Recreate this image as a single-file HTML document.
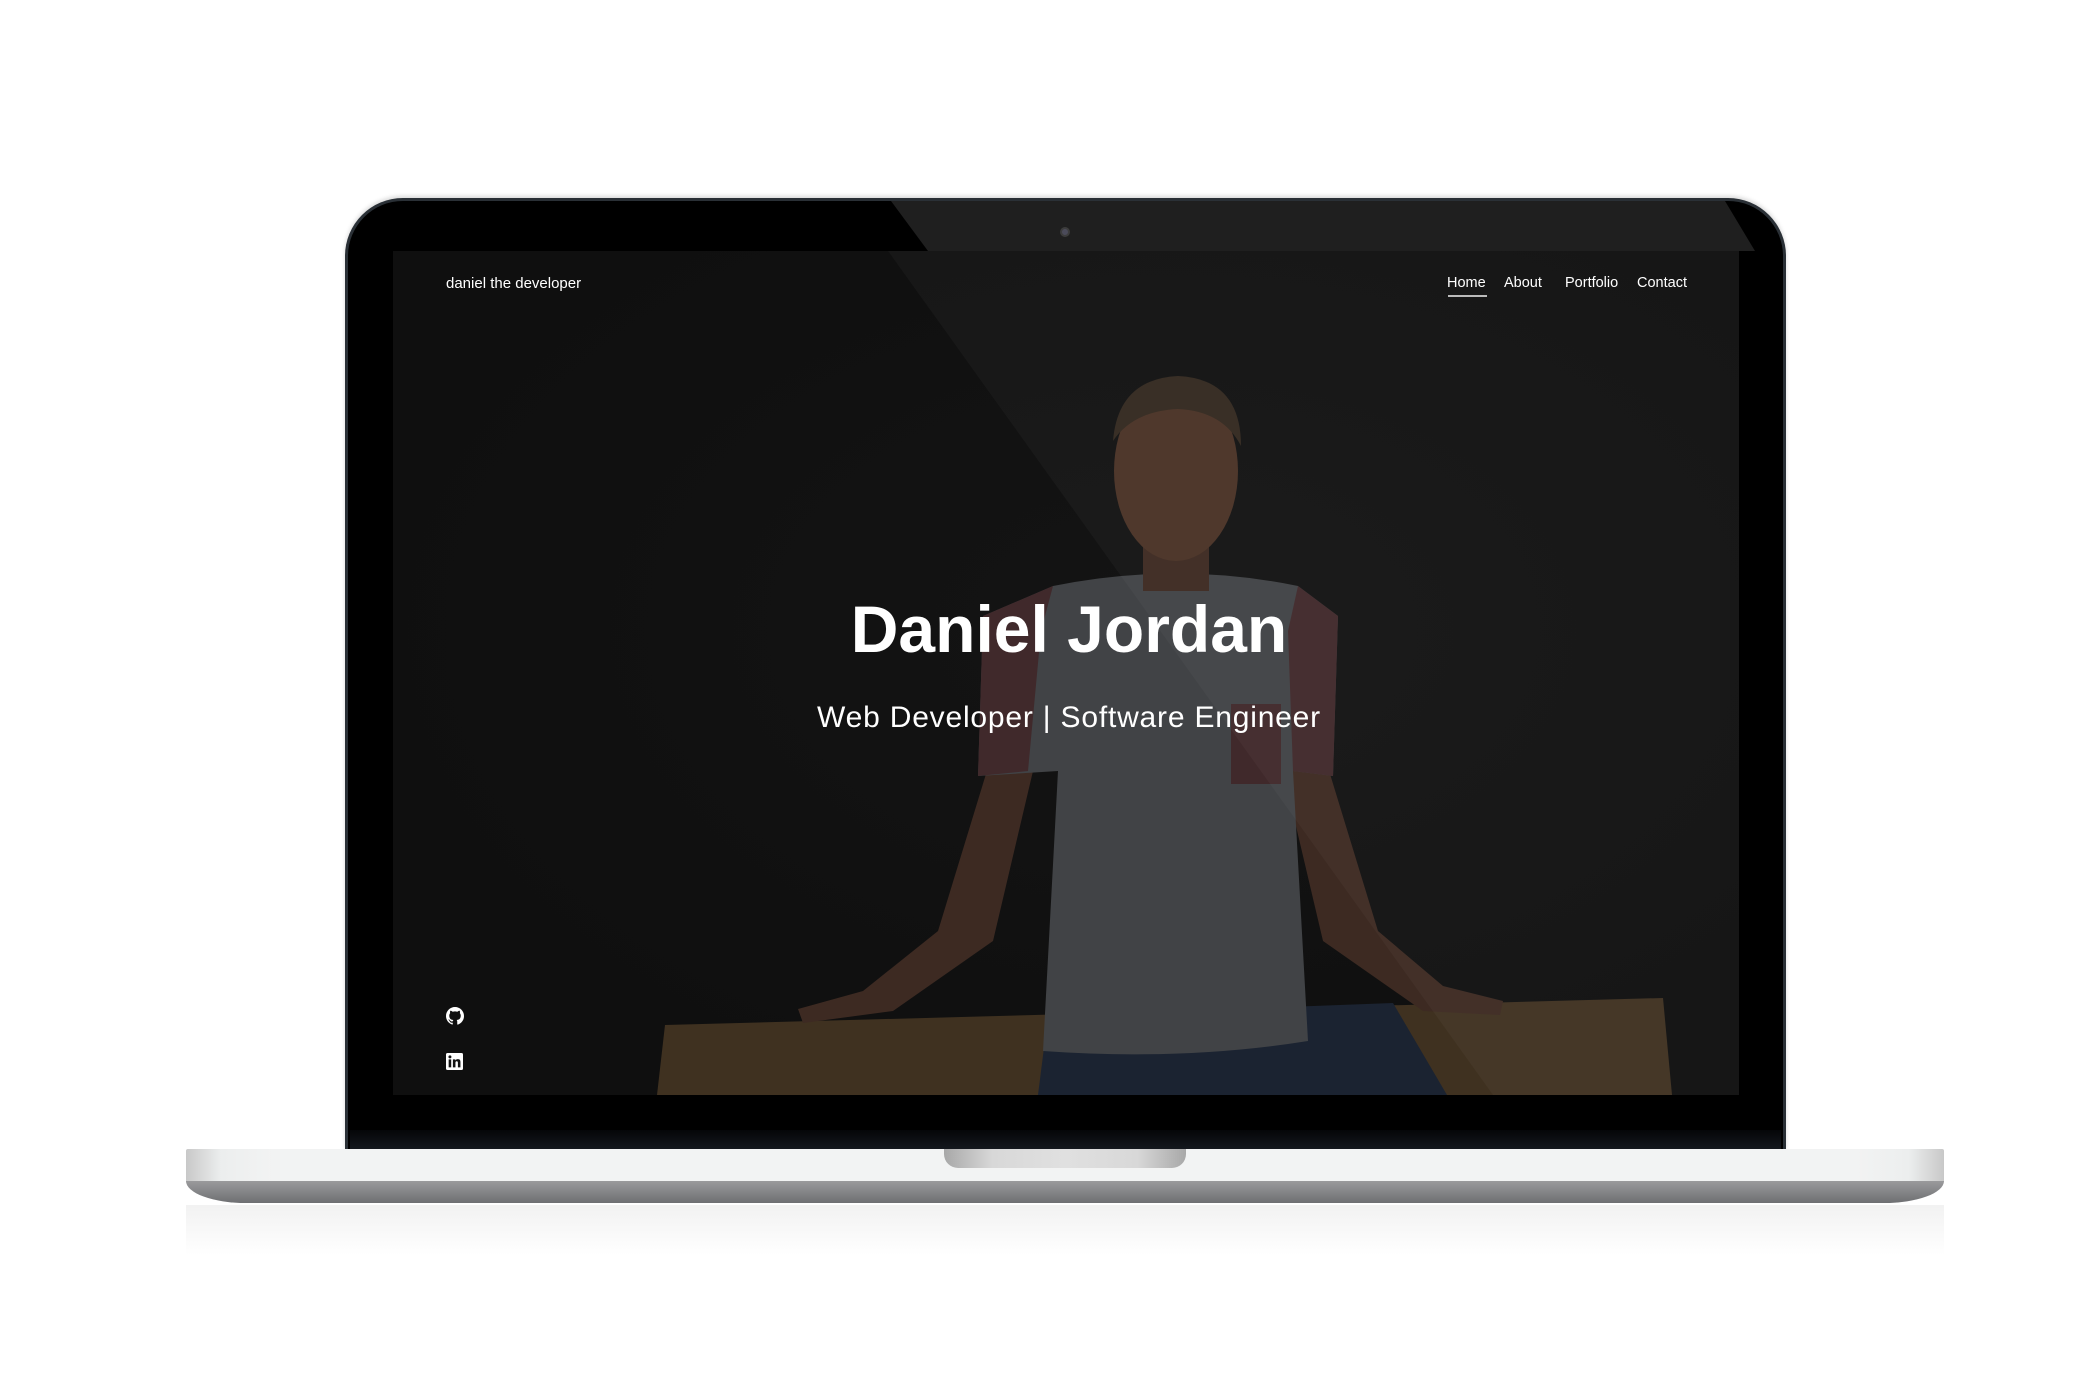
<!DOCTYPE html>
<html><head><meta charset="utf-8"><style>
*{margin:0;padding:0;box-sizing:border-box}
body{width:2100px;height:1400px;background:#fff;position:relative;overflow:hidden;font-family:"Liberation Sans",sans-serif}
.abs{position:absolute}
#bezel{left:345px;top:198px;width:1441px;height:953px;background:#000;border-radius:58px 58px 0 0;border:3px solid #2a3036;border-bottom:none;box-shadow:0 -2px 4px rgba(0,0,0,.15)}
#screen{left:393px;top:251px;width:1346px;height:844px;background:#111;overflow:hidden}
.t{color:#fff;position:absolute;white-space:nowrap}
</style></head><body>
<div id="bezel" class="abs"></div>
<div class="abs" style="left:1060px;top:227px;width:10px;height:10px;border-radius:50%;background:#334;border:2px solid #222"></div>
<div id="screen" class="abs">
<svg class="abs" style="left:0;top:0" width="1346" height="844" viewBox="0 0 1346 844">
<defs><radialGradient id="bg" cx="0.58" cy="0.45" r="0.6"><stop offset="0" stop-color="#141414"/><stop offset="1" stop-color="#0f0f0f"/></radialGradient></defs>
<rect width="1346" height="844" fill="url(#bg)"/>
<!-- table -->
<polygon points="272,774 1270,747 1279,844 264,844" fill="#3f3120"/>
<!-- arms -->
<path d="M600,500 L640,520 L600,690 L500,760 L410,772 L405,758 L470,740 L545,680Z" fill="#3d2a22"/>
<path d="M930,500 L890,520 L930,690 L1030,760 L1107,764 L1110,750 L1050,735 L985,680Z" fill="#3d2a22"/>
<!-- jeans -->
<polygon points="655,765 1000,752 1054,844 645,844" fill="#1b2331"/>
<!-- shirt -->
<path d="M660,335 Q783,310 905,335 L945,365 L940,525 L900,520 L915,790 Q790,810 650,800 L665,520 L585,525 L590,365Z" fill="#414346"/>
<path d="M905,335 L945,365 L940,525 L900,520 L895,380Z" fill="#40292b"/>
<path d="M660,335 L590,365 L585,525 L635,520 L648,380Z" fill="#40292b"/>
<rect x="838" y="453" width="50" height="80" fill="#40292b"/>
<!-- neck & head -->
<rect x="750" y="280" width="66" height="60" fill="#3d2a22"/>
<ellipse cx="783" cy="220" rx="62" ry="90" fill="#4a3226"/>
<path d="M720,190 Q725,128 785,125 Q848,128 848,195 Q830,160 785,158 Q740,160 720,190Z" fill="#33291f"/>
<polygon points="495,0 1346,0 1346,844 1100,844" fill="#fff" opacity="0.03"/>
</svg>
<div class="t" style="left:53px;top:24px;font-size:15px">daniel the developer</div>
<div class="t" style="left:1054px;top:24px;font-size:14.5px">Home</div>
<div class="abs" style="left:1055px;top:44px;width:39px;height:2px;background:#bbb"></div>
<div class="t" style="left:1111px;top:24px;font-size:14.5px">About</div>
<div class="t" style="left:1172px;top:24px;font-size:14.5px">Portfolio</div>
<div class="t" style="left:1244px;top:24px;font-size:14.5px">Contact</div>
<div class="t" style="width:1346px;text-align:center;top:340px;font-size:66px;font-weight:bold;left:3px">Daniel Jordan</div>
<div class="t" style="width:1346px;text-align:center;top:450px;font-size:30px;letter-spacing:0.8px;left:3px">Web Developer | Software Engineer</div>
<svg class="abs" style="left:53px;top:756px" width="18" height="18" viewBox="0 0 16 16"><path fill="#fff" d="M8 0C3.58 0 0 3.58 0 8c0 3.540 2.29 6.53 5.47 7.59.4.07.55-.17.55-.38v-1.33c-2.23.48-2.7-1.07-2.7-1.07-.36-.92-.89-1.170-.89-1.17-.73-.5.06-.49.06-.49.8.06 1.23.83 1.23.83.72 1.22 1.87.87 2.33.66.07-.52.28-.87.5-1.07-1.78-.2-3.64-.89-3.64-3.95 0-.87.31-1.59.82-2.15-.08-.2-.36-1.02.08-2.12 0 0 .67-.21 2.2.82a7.6 7.6 0 0 1 4 0c1.53-1.04 2.2-.82 2.2-.82.44 1.1.16 1.92.08 2.12.51.56.82 1.27.82 2.15 0 3.07-1.87 3.75-3.65 3.95.29.25.54.73.54 1.48v2.2c0 .21.15.46.55.38A8 8 0 0 0 16 8c0-4.42-3.58-8-8-8z"/></svg>
<svg class="abs" style="left:53px;top:802px" width="17" height="17" viewBox="0 0 16 16"><rect width="16" height="16" rx="1.5" fill="#fff"/><rect x="2.5" y="6" width="2.4" height="7.5" fill="#111"/><circle cx="3.7" cy="3.6" r="1.4" fill="#111"/><path d="M6.5 6h2.3v1.1c.4-.7 1.2-1.3 2.4-1.3 2 0 2.4 1.3 2.4 3v4.7h-2.4V9.4c0-.9-.2-1.6-1.1-1.6-1 0-1.2.7-1.2 1.6v4.1H6.5z" fill="#111"/></svg>
</div>
<svg class="abs" style="left:345px;top:198px" width="1441" height="60"><polygon points="546,3 1380,3 1410,53 583,53" fill="#fff" opacity="0.12"/></svg>
<div class="abs" style="left:350px;top:1130px;width:1431px;height:19px;background:linear-gradient(#050608,#14181e)"></div>
<div class="abs" style="left:186px;top:1149px;width:1758px;height:33px;background:linear-gradient(90deg,#c8c8c8 0,#eceeee 2%,#f2f3f3 5%,#f2f3f3 95%,#eceeee 98%,#c8c8c8 100%);border-radius:2px 2px 0 0"></div>
<div class="abs" style="left:186px;top:1181px;width:1758px;height:22px;background:linear-gradient(#9a9a9c,#6e6f72);border-radius:0 0 60px 60px/0 0 22px 22px"></div>
<div class="abs" style="left:944px;top:1149px;width:242px;height:19px;background:linear-gradient(90deg,#a8a8a8,#d8d8d8 20%,#e0e0e0 50%,#d8d8d8 80%,#a8a8a8);border-radius:0 0 14px 14px"></div>
<div class="abs" style="left:186px;top:1205px;width:1758px;height:50px;background:linear-gradient(#ececec,#fff);opacity:.7"></div>
</body></html>
